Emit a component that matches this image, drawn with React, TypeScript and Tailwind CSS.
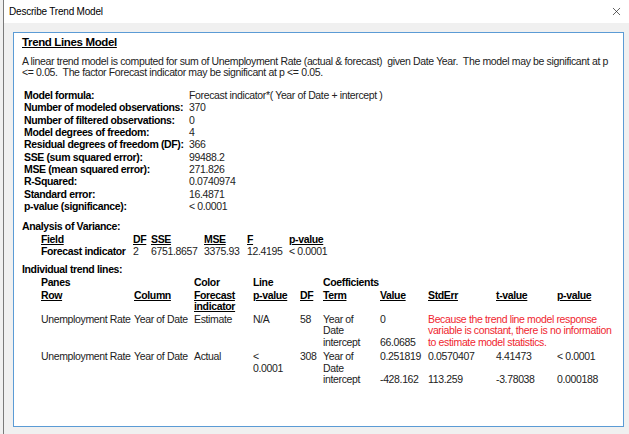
import { X } from 'lucide-react'

const stats: [string, string][] = [
  ['Model formula:', 'Forecast indicator*( Year of Date + intercept )'],
  ['Number of modeled observations:', '370'],
  ['Number of filtered observations:', '0'],
  ['Model degrees of freedom:', '4'],
  ['Residual degrees of freedom (DF):', '366'],
  ['SSE (sum squared error):', '99488.2'],
  ['MSE (mean squared error):', '271.826'],
  ['R-Squared:', '0.0740974'],
  ['Standard error:', '16.4871'],
  ['p-value (significance):', '< 0.0001'],
]

const trendCols = 'grid grid-cols-[93px_60px_59px_47px_23px_57px_48px_68px_61px_1fr]'
const anovaCols = 'grid grid-cols-[92px_18px_53px_43px_42px_1fr]'

export default function App() {
  return (
    <div className="h-[434px] w-[629px] overflow-hidden bg-[#f0f0f0] pl-[3px] font-['Liberation_Sans',Arial,sans-serif] text-[10.5px] tracking-[-0.36px] text-[#222]">
      <div className="flex h-full flex-col border-l border-[#7a7a7a]">
        {/* title bar */}
        <div className="flex h-[23px] items-center justify-between bg-white pl-[5px] pr-[6px]">
          <span className="text-[10px] tracking-[-0.2px] text-black">Describe Trend Model</span>
          <X size={13} strokeWidth={1.3} className="text-[#222]" />
        </div>

        {/* report panel */}
        <div className="mt-[9px] ml-[9px] mr-[5px] h-[395px] border border-[#5b9bd5] bg-white pl-[8px] pr-2 pt-[3px] leading-[11px]">
          <div className="text-[11.5px] font-bold leading-[13px] text-black underline">Trend Lines Model</div>

          <p className="mt-[7px] leading-[11px]">
            A linear trend model is computed for sum of Unemployment Rate (actual &amp; forecast)&nbsp; given Date Year.&nbsp; The model may be significant at p
            <br />
            &lt;= 0.05.&nbsp; The factor Forecast indicator may be significant at p &lt;= 0.05.
          </p>

          <div className="mt-[11px] ml-[2px] grid grid-cols-[165px_1fr] leading-[12.33px]">
            {stats.map(([k, v]) => (
              <div key={k} className="contents">
                <div className="font-bold text-black">{k}</div>
                <div>{v}</div>
              </div>
            ))}
          </div>

          <div className="mt-[8px] font-bold leading-[12.5px] text-black">Analysis of Variance:</div>
          <div className="ml-[19px] leading-[12.5px]">
            <div className={`${anovaCols} font-bold text-black`}>
              <span className="underline">Field</span>
              <span className="underline">DF</span>
              <span className="underline">SSE</span>
              <span className="underline">MSE</span>
              <span className="underline">F</span>
              <span className="underline">p-value</span>
            </div>
            <div className={anovaCols}>
              <span className="font-bold text-black">Forecast indicator</span>
              <span>2</span>
              <span>6751.8657</span>
              <span>3375.93</span>
              <span>12.4195</span>
              <span>&lt; 0.0001</span>
            </div>
          </div>

          <div className="mt-[5px] font-bold leading-[12.5px] text-black">Individual trend lines:</div>
          <div className="ml-[19px] mt-[2px] leading-[11.5px]">
            <div className={`${trendCols} font-bold text-black`}>
              <span>Panes</span>
              <span />
              <span>Color</span>
              <span>Line</span>
              <span />
              <span>Coefficients</span>
            </div>
            <div className={`${trendCols} mt-[1px] font-bold text-black`}>
              <span className="underline">Row</span>
              <span className="underline">Column</span>
              <span className="underline">
                Forecast
                <br />
                indicator
              </span>
              <span className="underline">p-value</span>
              <span className="underline">DF</span>
              <span className="underline">Term</span>
              <span className="underline">Value</span>
              <span className="underline">StdErr</span>
              <span className="underline">t-value</span>
              <span className="underline">p-value</span>
            </div>

            <div className={`${trendCols} mt-[1px]`}>
              <span>Unemployment Rate</span>
              <span>Year of Date</span>
              <span>Estimate</span>
              <span>N/A</span>
              <span>58</span>
              <div>
                Year of
                <br />
                Date
                <br />
                intercept
              </div>
              <div>
                0
                <br />
                <br />
                66.0685
              </div>
              <div className="col-span-3 text-[#f0262f]">
                Because the trend line model response
                <br />
                variable is constant, there is no information
                <br />
                to estimate model statistics.
              </div>
            </div>

            <div className={`${trendCols} mt-[3px]`}>
              <span>Unemployment Rate</span>
              <span>Year of Date</span>
              <span>Actual</span>
              <span>
                &lt;
                <br />
                0.0001
              </span>
              <span>308</span>
              <div>
                Year of
                <br />
                Date
                <br />
                intercept
              </div>
              <div>
                0.251819
                <br />
                <br />
                -428.162
              </div>
              <div>
                0.0570407
                <br />
                <br />
                113.259
              </div>
              <div>
                4.41473
                <br />
                <br />
                -3.78038
              </div>
              <div>
                &lt; 0.0001
                <br />
                <br />
                0.000188
              </div>
            </div>
          </div>
        </div>
      </div>
    </div>
  )
}
